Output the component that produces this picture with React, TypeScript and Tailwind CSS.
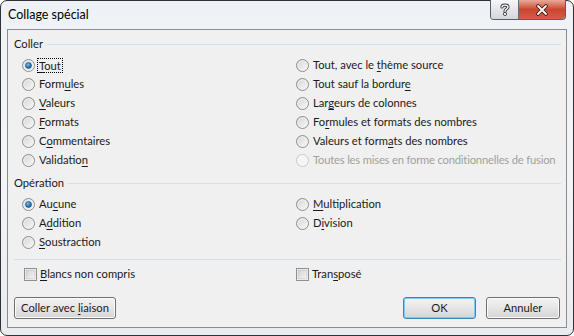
import React from "react"

const font = { fontFamily: "Lato, 'Liberation Sans', sans-serif" }

const Mn = ({ text, at }: { text: string; at: number }) => (
  <>
    {text.slice(0, at)}
    <span className="underline decoration-1 underline-offset-2">{text[at]}</span>
    {text.slice(at + 1)}
  </>
)

const Radio = ({ checked, disabled }: { checked?: boolean; disabled?: boolean }) => (
  <svg width="13" height="13" viewBox="0 0 13 13" className="shrink-0">
    <defs>
      <linearGradient id="rfill" x1="0" y1="0" x2="1" y2="1">
        <stop offset="0" stopColor="#d2d3d5" />
        <stop offset="1" stopColor="#fbfbfb" />
      </linearGradient>
      <radialGradient id="rdot" cx="0.4" cy="0.35" r="0.7">
        <stop offset="0" stopColor="#7cc0f0" />
        <stop offset="0.6" stopColor="#2a7ab8" />
        <stop offset="1" stopColor="#1a4e80" />
      </radialGradient>
    </defs>
    <circle cx="6.5" cy="6.5" r="6" fill={disabled ? "#f4f4f4" : "url(#rfill)"} stroke={disabled ? "#c8c9ca" : "#8d8e8f"} />
    <circle cx="6.5" cy="6.5" r="4.6" fill="none" stroke={disabled ? "#f8f8f8" : "#f0f0f0"} strokeWidth="0.8" />
    {checked && <circle cx="6.5" cy="6.5" r="3" fill="url(#rdot)" stroke="#1b4f7f" strokeWidth="0.6" />}
  </svg>
)

const Check = () => (
  <svg width="13" height="13" viewBox="0 0 13 13" className="shrink-0">
    <defs>
      <linearGradient id="cfill" x1="0" y1="0" x2="1" y2="1">
        <stop offset="0" stopColor="#d1d2d4" />
        <stop offset="1" stopColor="#f6f6f6" />
      </linearGradient>
    </defs>
    <rect x="0.5" y="0.5" width="12" height="12" fill="#fff" stroke="#8e8f8f" />
    <rect x="2" y="2" width="9" height="9" fill="url(#cfill)" stroke="#b5b6b7" strokeWidth="0.6" />
  </svg>
)

const Option = ({
  children,
  checked,
  disabled,
  focus,
}: {
  children: React.ReactNode
  checked?: boolean
  disabled?: boolean
  focus?: boolean
}) => (
  <div className="flex h-[19px] items-center whitespace-nowrap">
    <Radio checked={checked} disabled={disabled} />
    <span
      className={
        (disabled ? "tracking-[-0.18px] text-[#a0a0a0] " : "text-[#1a1a1a] ") +
        (focus ? "ml-[2px] border border-dotted border-black px-[1px] leading-[13px]" : "ml-[4px]")
      }
    >
      {children}
    </span>
  </div>
)

const Legend = ({ label }: { label: string }) => (
  <div className="flex h-[16px] items-center gap-[4px] pl-[6px] pr-[5px]">
    <span className="text-[#1a1a1a]">{label}</span>
    <div className="h-px flex-1 bg-[#d5dfe6]" />
  </div>
)

const Btn = ({ children, w, primary }: { children: React.ReactNode; w: string; primary?: boolean }) => (
  <button
    className={
      w +
      " h-[22px] rounded-[3px] border bg-gradient-to-b from-[#f3f3f3] via-[#e6e6e6] to-[#d4d4d4] text-[#1a1a1a] " +
      (primary
        ? "border-[#3a84b8] shadow-[inset_0_0_0_1px_#7ccdee]"
        : "border-[#707070] shadow-[inset_0_0_0_1px_#fbfbfb]")
    }
  >
    {children}
  </button>
)

export default function App() {
  return (
    <div className="h-[336px] w-[574px] bg-white text-[11.2px]" style={font}>
      <div className="flex h-[336px] w-[574px] flex-col rounded-[7px] border border-[#2f3134] bg-gradient-to-b from-[#eef2f6] via-[#f3f5f7] to-[#e9ecef] px-[6px] pb-[7px]">
        <div className="flex h-[28px] items-start">
          <span className="pl-[1px] pt-[6px] text-[12.5px] leading-[16px] text-black">Collage spécial</span>
          <div className="-mt-px mr-px ml-auto flex h-[20px] overflow-hidden rounded-b-[4px] border border-t-0 border-[#5a5d61]">
            <div className="flex w-[28px] items-center justify-center border-r border-[#6a6d71] bg-gradient-to-b from-[#f6f7f8] via-[#e3e7eb] to-[#d3d8dd]">
              <svg width="10" height="13" viewBox="0 0 10 13">
                <path d="M2 4 C2 1.5 8 1.5 8 4 C8 6 5 6 5 8.2" fill="none" stroke="#3b3b3b" strokeWidth="3.2" strokeLinecap="round" />
                <path d="M2 4 C2 1.5 8 1.5 8 4 C8 6 5 6 5 8.2" fill="none" stroke="#fff" strokeWidth="1.4" strokeLinecap="round" />
                <circle cx="5" cy="11" r="1.6" fill="#fff" stroke="#3b3b3b" strokeWidth="0.9" />
              </svg>
            </div>
            <div className="flex w-[46px] items-center justify-center bg-gradient-to-b from-[#e9a99b] via-[#c9462f] to-[#d45e45]">
              <svg width="14" height="12" viewBox="0 0 14 12">
                <path d="M3 2 L11 10 M11 2 L3 10" stroke="#3e1a14" strokeWidth="3.6" strokeLinecap="round" />
                <path d="M3 2 L11 10 M11 2 L3 10" stroke="#fff" strokeWidth="1.8" strokeLinecap="round" />
              </svg>
            </div>
          </div>
        </div>

        <div className="flex flex-1 flex-col border border-[#898c92] bg-[#f0f0f0] pt-[6px]">
          <Legend label="Coller" />
          <div className="mt-[4px] grid grid-cols-[274px_1fr] pl-[14px]">
            <div className="flex flex-col">
              <Option checked focus>
                <Mn text="Tout" at={0} />
              </Option>
              <Option>
                <Mn text="Formules" at={4} />
              </Option>
              <Option>
                <Mn text="Valeurs" at={0} />
              </Option>
              <Option>
                <Mn text="Formats" at={0} />
              </Option>
              <Option>
                <Mn text="Commentaires" at={1} />
              </Option>
              <Option>
                <Mn text="Validation" at={9} />
              </Option>
            </div>
            <div className="flex flex-col">
              <Option>
                <Mn text="Tout, avec le thème source" at={14} />
              </Option>
              <Option>
                <Mn text="Tout sauf la bordure" at={19} />
              </Option>
              <Option>
                <Mn text="Largeurs de colonnes" at={3} />
              </Option>
              <Option>
                <Mn text="Formules et formats des nombres" at={2} />
              </Option>
              <Option>
                <Mn text="Valeurs et formats des nombres" at={15} />
              </Option>
              <Option disabled>Toutes les mises en forme conditionnelles de fusion</Option>
            </div>
          </div>

          <div className="mt-[5px]">
            <Legend label="Opération" />
          </div>
          <div className="mt-[4px] grid grid-cols-[274px_1fr] pl-[14px]">
            <div className="flex flex-col">
              <Option checked>
                <Mn text="Aucune" at={2} />
              </Option>
              <Option>
                <Mn text="Addition" at={1} />
              </Option>
              <Option>
                <Mn text="Soustraction" at={0} />
              </Option>
            </div>
            <div className="flex flex-col">
              <Option>
                <Mn text="Multiplication" at={0} />
              </Option>
              <Option>
                <Mn text="Division" at={1} />
              </Option>
            </div>
          </div>

          <div className="mt-[7px] ml-[6px] mr-[5px] h-px bg-[#d5dfe6]" />

          <div className="mt-[5px] grid grid-cols-[274px_1fr] pl-[16px]">
            <div className="flex h-[19px] items-center gap-[3px]">
              <Check />
              <span className="text-[#1a1a1a]">
                <Mn text="Blancs non compris" at={0} />
              </span>
            </div>
            <div className="-ml-[2px] flex h-[19px] items-center gap-[3px]">
              <Check />
              <span className="text-[#1a1a1a]">
                <Mn text="Transposé" at={4} />
              </span>
            </div>
          </div>

          <div className="mt-[13px] flex items-center gap-[10px] pl-[6px] pr-[6px]">
            <Btn w="w-[102px]">
              Coller avec <Mn text="liaison" at={0} />
            </Btn>
            <div className="ml-auto" />
            <Btn w="w-[73px]" primary>
              OK
            </Btn>
            <Btn w="w-[74px]">Annuler</Btn>
          </div>
        </div>
      </div>
    </div>
  )
}
